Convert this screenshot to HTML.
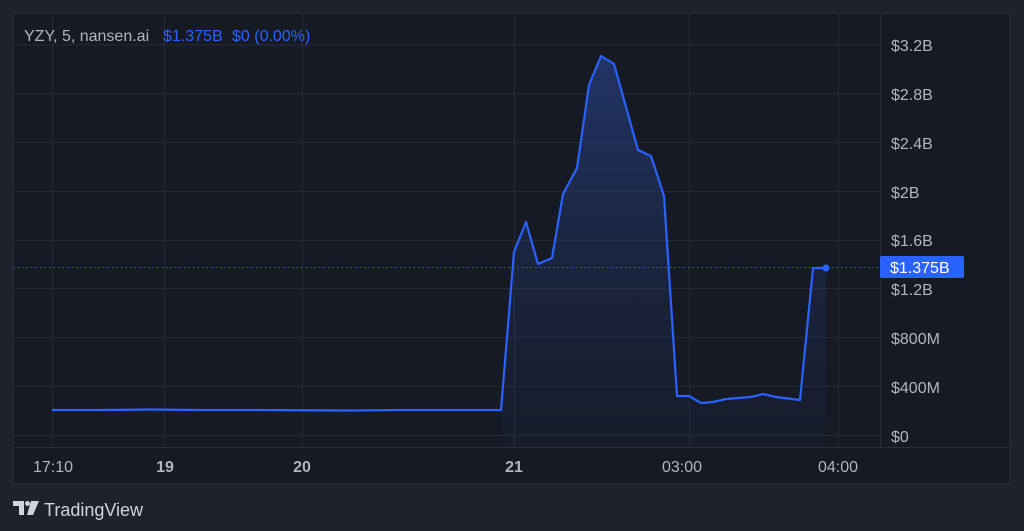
<!DOCTYPE html>
<html><head><meta charset="utf-8"><style>
body{margin:0;width:1024px;height:531px;background:#1f222c;font-family:"Liberation Sans",sans-serif;overflow:hidden;position:relative}
svg{position:absolute;left:0;top:0}
</style></head><body>
<svg width="1024" height="531" viewBox="0 0 1024 531">
<defs><linearGradient id="g" x1="0" y1="0" x2="0" y2="1"><stop offset="0" stop-color="#2a4a9a" stop-opacity="0.55"/><stop offset="1" stop-color="#1c2a50" stop-opacity="0.15"/></linearGradient></defs>
<rect x="13" y="13" width="997" height="471" fill="#161a25" stroke="#2a2e39"/>
<g stroke="#272b37" stroke-width="1">
<line x1="13" y1="45" x2="880" y2="45"/><line x1="13" y1="93.5" x2="880" y2="93.5"/><line x1="13" y1="142.5" x2="880" y2="142.5"/><line x1="13" y1="191.5" x2="880" y2="191.5"/><line x1="13" y1="240.5" x2="880" y2="240.5"/><line x1="13" y1="288.5" x2="880" y2="288.5"/><line x1="13" y1="337.5" x2="880" y2="337.5"/><line x1="13" y1="386.5" x2="880" y2="386.5"/><line x1="13" y1="435.5" x2="880" y2="435.5"/>
<line x1="52.5" y1="13" x2="52.5" y2="447"/><line x1="164.5" y1="13" x2="164.5" y2="447"/><line x1="302.5" y1="13" x2="302.5" y2="447"/><line x1="514.5" y1="13" x2="514.5" y2="447"/><line x1="689.5" y1="13" x2="689.5" y2="447"/><line x1="838.5" y1="13" x2="838.5" y2="447"/>
</g>
<line x1="13" y1="447.5" x2="1010" y2="447.5" stroke="#2a2e39"/>
<line x1="880.5" y1="13" x2="880.5" y2="447" stroke="#2a2e39"/>
<path d="M501,410 L514,252 526,222 538,264 552,258 563,194 577,168 589,85 601,56 614,64 638,150 651,156 664,196 677,396 689,396 701,403 713,402 726,399 751,397 763,394 776,397 800,400 813,268 826,268 L826,447 L501,447Z" fill="url(#g)"/>
<line x1="13" y1="267.5" x2="880" y2="267.5" stroke="#2962ff" stroke-dasharray="1.5 3"/>
<polyline fill="none" stroke="#2962ff" stroke-width="2.2" stroke-linejoin="round" points="52,410 100,410 150,409.5 200,410 250,410 350,410.5 400,410 501,410 514,252 526,222 538,264 552,258 563,194 577,168 589,85 601,56 614,64 638,150 651,156 664,196 677,396 689,396 701,403 713,402 726,399 751,397 763,394 776,397 800,400 813,268 826,268"/>
<circle cx="826" cy="268" r="3.5" fill="#2962ff"/>
<g font-size="16" fill="#b2b5be">
<text x="891" y="51">$3.2B</text><text x="891" y="100">$2.8B</text><text x="891" y="149">$2.4B</text><text x="891" y="198">$2B</text><text x="891" y="246">$1.6B</text><text x="891" y="295">$1.2B</text><text x="891" y="344">$800M</text><text x="891" y="393">$400M</text><text x="891" y="442">$0</text>
</g>
<rect x="880" y="256" width="84" height="22" rx="2" fill="#2962ff"/>
<text x="890" y="273" font-size="16" fill="#fff">$1.375B</text>
<g font-size="16" fill="#b2b5be" text-anchor="middle">
<text x="53" y="472">17:10</text><text x="165" y="472" font-weight="bold">19</text><text x="302" y="472" font-weight="bold">20</text><text x="514" y="472" font-weight="bold">21</text><text x="682" y="472">03:00</text><text x="838" y="472">04:00</text>
</g>
<text x="24" y="41" font-size="16" fill="#b2b5be">YZY, 5, nansen.ai</text>
<text x="163" y="41" font-size="16" fill="#2962ff">$1.375B</text>
<text x="232" y="41" font-size="16" fill="#2962ff">$0 (0.00%)</text>
<g fill="#d1d4dc">
<path d="M13,501 h11 v14 h-5 v-9 h-6z"/><circle cx="27.5" cy="503.5" r="2.5"/><path d="M31,501 h8 l-6,14 h-6z"/>
</g>
<text x="44" y="516" font-size="18" fill="#d1d4dc">TradingView</text>
</svg>
</body></html>
